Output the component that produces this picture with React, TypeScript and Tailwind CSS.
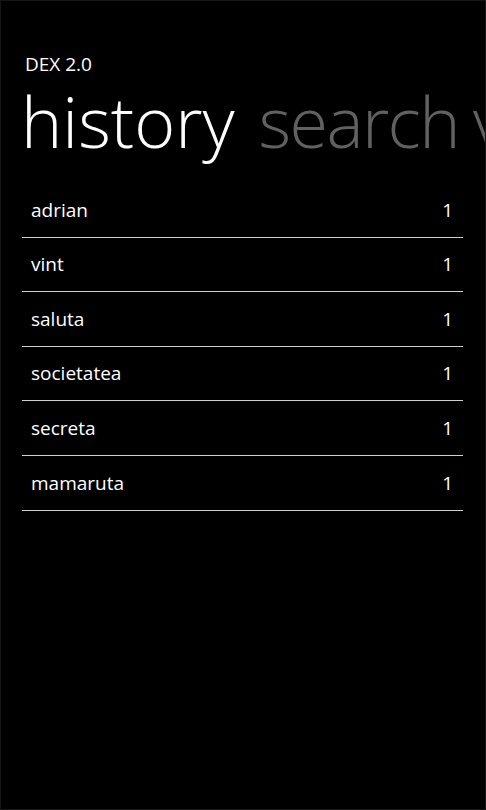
const history = [
  { word: "adrian", count: 1 },
  { word: "vint", count: 1 },
  { word: "saluta", count: 1 },
  { word: "societatea", count: 1 },
  { word: "secreta", count: 1 },
  { word: "mamaruta", count: 1 },
];

export default function App() {
  return (
    <main
      className="h-[810px] w-full overflow-hidden bg-black border border-[#161616] text-white"
      style={{ fontFamily: '"Open Sans", "Noto Sans", sans-serif' }}
    >
      <div className="pt-[49px] pl-[24px] text-[19px] leading-[28px]">DEX 2.0</div>

      {/* pivot headers, the last one runs off the screen */}
      <div className="mt-[1px] flex gap-[24px] whitespace-nowrap pl-[20px] text-[70px] font-light leading-[84px]">
        <span className="text-white">history</span>
        <span className="tracking-[-1.6px] text-[#616161]">search</span>
        <span className="-ml-[10px] tracking-[-1.4px] text-[#616161]">vizualizare</span>
      </div>

      <ul className="ml-[21px] mr-[22px] mt-[20px]">
        {history.map((item) => (
          <li
            key={item.word}
            className="flex h-[54.6px] items-center justify-between border-b border-[#cfcfcf] pl-[9px] pr-[10px] text-[19px]"
          >
            <span>{item.word}</span>
            <span>{item.count}</span>
          </li>
        ))}
      </ul>
    </main>
  );
}
